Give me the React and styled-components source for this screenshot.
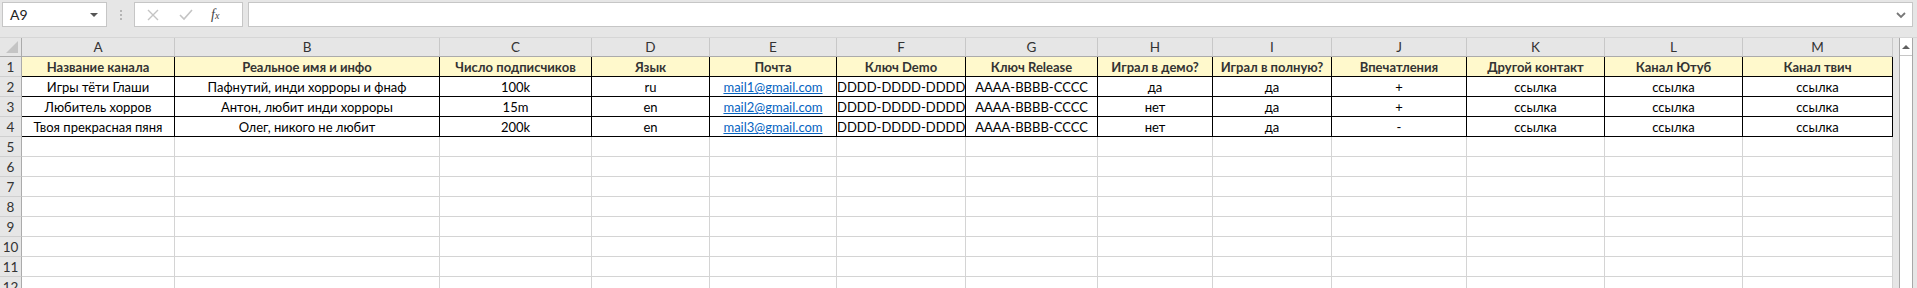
import React from 'react'
import styled, { createGlobalStyle } from 'styled-components'

const GlobalStyle = createGlobalStyle`
    html, body {
        margin: 0;
        padding: 0;
        background: #e6e6e6;
        overflow: hidden;
    }
    body {
        font-family: "Lato", "Liberation Sans", sans-serif;
    }
`;

// column boundaries taken from the sheet: row header + A..M
const widths = [22, 153, 265, 152, 118, 127, 129, 132, 115, 119, 135, 138, 138, 150];
const letters = ['A', 'B', 'C', 'D', 'E', 'F', 'G', 'H', 'I', 'J', 'K', 'L', 'M'];

const headers = [
    'Название канала', 'Реальное имя и инфо', 'Число подписчиков', 'Язык', 'Почта',
    'Ключ Demo', 'Ключ Release', 'Играл в демо?', 'Играл в полную?', 'Впечатления',
    'Другой контакт', 'Канал Ютуб', 'Канал твич'
];

const rows = [
    ['Игры тёти Глаши', 'Пафнутий, инди хорроры и фнаф', '100k', 'ru', 'mail1@gmail.com',
        'DDDD-DDDD-DDDD', 'AAAA-BBBB-CCCC', 'да', 'да', '+', 'ссылка', 'ссылка', 'ссылка'],
    ['Любитель хорров', 'Антон, любит инди хорроры', '15m', 'en', 'mail2@gmail.com',
        'DDDD-DDDD-DDDD', 'AAAA-BBBB-CCCC', 'нет', 'да', '+', 'ссылка', 'ссылка', 'ссылка'],
    ['Твоя прекрасная пяня', 'Олег, никого не любит', '200k', 'en', 'mail3@gmail.com',
        'DDDD-DDDD-DDDD', 'AAAA-BBBB-CCCC', 'нет', 'да', '-', 'ссылка', 'ссылка', 'ссылка'],
];

const Page = styled.div`
    width: 1917px;
    height: 288px;
    overflow: hidden;
    background: #e6e6e6;
`;

const FormulaBar = styled.div`
    height: 37px;
    box-sizing: border-box;
    padding: 2px 4px 0 2px;
    display: flex;
    align-items: flex-start;
    background: #e6e6e6;
`;

const NameBox = styled.div`
    width: 105px;
    height: 25px;
    box-sizing: border-box;
    background: #fff;
    border: 1px solid #c6c6c6;
    display: flex;
    align-items: center;
    justify-content: space-between;
    padding: 0 8px 0 7px;
    font-size: 14px;
    color: #222;
`;

const Caret = styled.span`
    width: 0;
    height: 0;
    border-left: 4px solid transparent;
    border-right: 4px solid transparent;
    border-top: 4px solid #555;
`;

const Dots = styled.div`
    width: 27px;
    height: 25px;
    display: flex;
    flex-direction: column;
    align-items: center;
    justify-content: center;
    gap: 2px;
    & span {
        width: 2px;
        height: 2px;
        background: #b5b5b5;
    }
`;

const FnBox = styled.div`
    width: 109px;
    height: 25px;
    box-sizing: border-box;
    background: #fff;
    border: 1px solid #c6c6c6;
    display: flex;
    align-items: center;
    padding-left: 12px;
    gap: 20px;
`;

const Fx = styled.span`
    font-family: "Liberation Serif", serif;
    font-style: italic;
    font-size: 14px;
    color: #444;
    margin-left: -2px;
    & sub {
        font-size: 10px;
        vertical-align: baseline;
    }
`;

const FormulaInput = styled.div`
    flex: 1;
    height: 25px;
    margin-left: 5px;
    box-sizing: border-box;
    background: #fff;
    border: 1px solid #c6c6c6;
    display: flex;
    align-items: center;
    justify-content: flex-end;
    padding-right: 6px;
`;

const Sheet = styled.div`
    display: flex;
    border-top: 1px solid #d6d6d6;
`;

const Grid = styled.div`
    display: grid;
    grid-template-columns: ${widths.map(w => w + 'px').join(' ')};
    grid-template-rows: 19px;
    grid-auto-rows: 20px;
    background: #fff;
`;

const ColHead = styled.div`
    background: #e6e6e6;
    box-sizing: border-box;
    border-right: 1px solid #c8c8c8;
    border-bottom: 1px solid #ababab;
    font-size: 13.5px;
    color: #333;
    text-align: center;
    line-height: 19px;
`;

const Corner = styled.div`
    background: #e6e6e6;
    box-sizing: border-box;
    border-right: 1px solid #ababab;
    border-bottom: 1px solid #ababab;
    position: relative;
    &::after {
        content: '';
        position: absolute;
        right: 3px;
        bottom: 3px;
        width: 0;
        height: 0;
        border-left: 12px solid transparent;
        border-bottom: 12px solid #c4c4c4;
    }
`;

const RowHead = styled.div`
    background: #e6e6e6;
    box-sizing: border-box;
    border-right: 1px solid #ababab;
    border-bottom: 1px solid #cfcfcf;
    font-size: 13.5px;
    color: #333;
    text-align: center;
    line-height: 21px;
`;

const Cell = styled.div`
    box-sizing: border-box;
    border-right: 1px solid ${p => (p.$boxed ? '#000' : '#d4d4d4')};
    border-bottom: 1px solid ${p => (p.$boxed ? '#000' : '#d4d4d4')};
    background: ${p => (p.$head ? '#fff9cc' : '#fff')};
    font-size: 13px;
    font-weight: ${p => (p.$head ? 700 : 400)};
    color: ${p => (p.$head ? '#333' : '#000')};
    text-align: center;
    line-height: 21px;
    white-space: nowrap;
    overflow: hidden;
`;

const Mail = styled.span`
    color: #0563c1;
    text-decoration: underline;
`;

const Scrollbar = styled.div`
    width: 24px;
    display: flex;
    background: #e6e6e6;
`;

const Track = styled.div`
    width: 14px;
    margin-left: 6px;
    height: 260px;
    background: #fff;
    border-left: 1px solid #a8a8a8;
    border-right: 1px solid #a8a8a8;
    box-sizing: border-box;
`;

const UpButton = styled.div`
    height: 17px;
    margin-top: 1px;
    box-sizing: border-box;
    border-bottom: 1px solid #c6c6c6;
    display: flex;
    align-items: center;
    justify-content: center;
    &::before {
        content: '';
        width: 0;
        height: 0;
        border-left: 4px solid transparent;
        border-right: 4px solid transparent;
        border-bottom: 4px solid #606060;
    }
`;

const Cross = () => (
    <svg width="12" height="12" viewBox="0 0 12 12">
        <path d="M1 1 L11 11 M11 1 L1 11" stroke="#c4c4c4" strokeWidth="1.4" fill="none" />
    </svg>
);

const Check = () => (
    <svg width="14" height="12" viewBox="0 0 14 12">
        <path d="M1 6 L5 10 L13 1" stroke="#c4c4c4" strokeWidth="1.6" fill="none" />
    </svg>
);

const Chevron = () => (
    <svg width="10" height="8" viewBox="0 0 10 8">
        <path d="M1 2 L5 6 L9 2" stroke="#777" strokeWidth="1.8" fill="none" />
    </svg>
);

const App = () => {
    const emptyRows = [5, 6, 7, 8, 9, 10, 11, 12];
    return (
        <Page>
            <GlobalStyle />
            <FormulaBar>
                <NameBox>A9<Caret /></NameBox>
                <Dots><span /><span /><span /></Dots>
                <FnBox>
                    <Cross />
                    <Check />
                    <Fx>f<sub>x</sub></Fx>
                </FnBox>
                <FormulaInput><Chevron /></FormulaInput>
            </FormulaBar>
            <Sheet>
                <Grid>
                    <Corner />
                    {letters.map(l => <ColHead key={l}>{l}</ColHead>)}

                    <RowHead>1</RowHead>
                    {headers.map(h => <Cell key={h} $boxed $head>{h}</Cell>)}

                    {rows.map((r, i) => (
                        <React.Fragment key={i}>
                            <RowHead>{i + 2}</RowHead>
                            {r.map((v, j) => (
                                <Cell key={j} $boxed>
                                    {j === 4 ? <Mail>{v}</Mail> : v}
                                </Cell>
                            ))}
                        </React.Fragment>
                    ))}

                    {emptyRows.map(n => (
                        <React.Fragment key={n}>
                            <RowHead>{n}</RowHead>
                            {letters.map(l => <Cell key={l} />)}
                        </React.Fragment>
                    ))}
                </Grid>
                <Scrollbar>
                    <Track>
                        <UpButton />
                    </Track>
                </Scrollbar>
            </Sheet>
        </Page>
    )
}

export default App
